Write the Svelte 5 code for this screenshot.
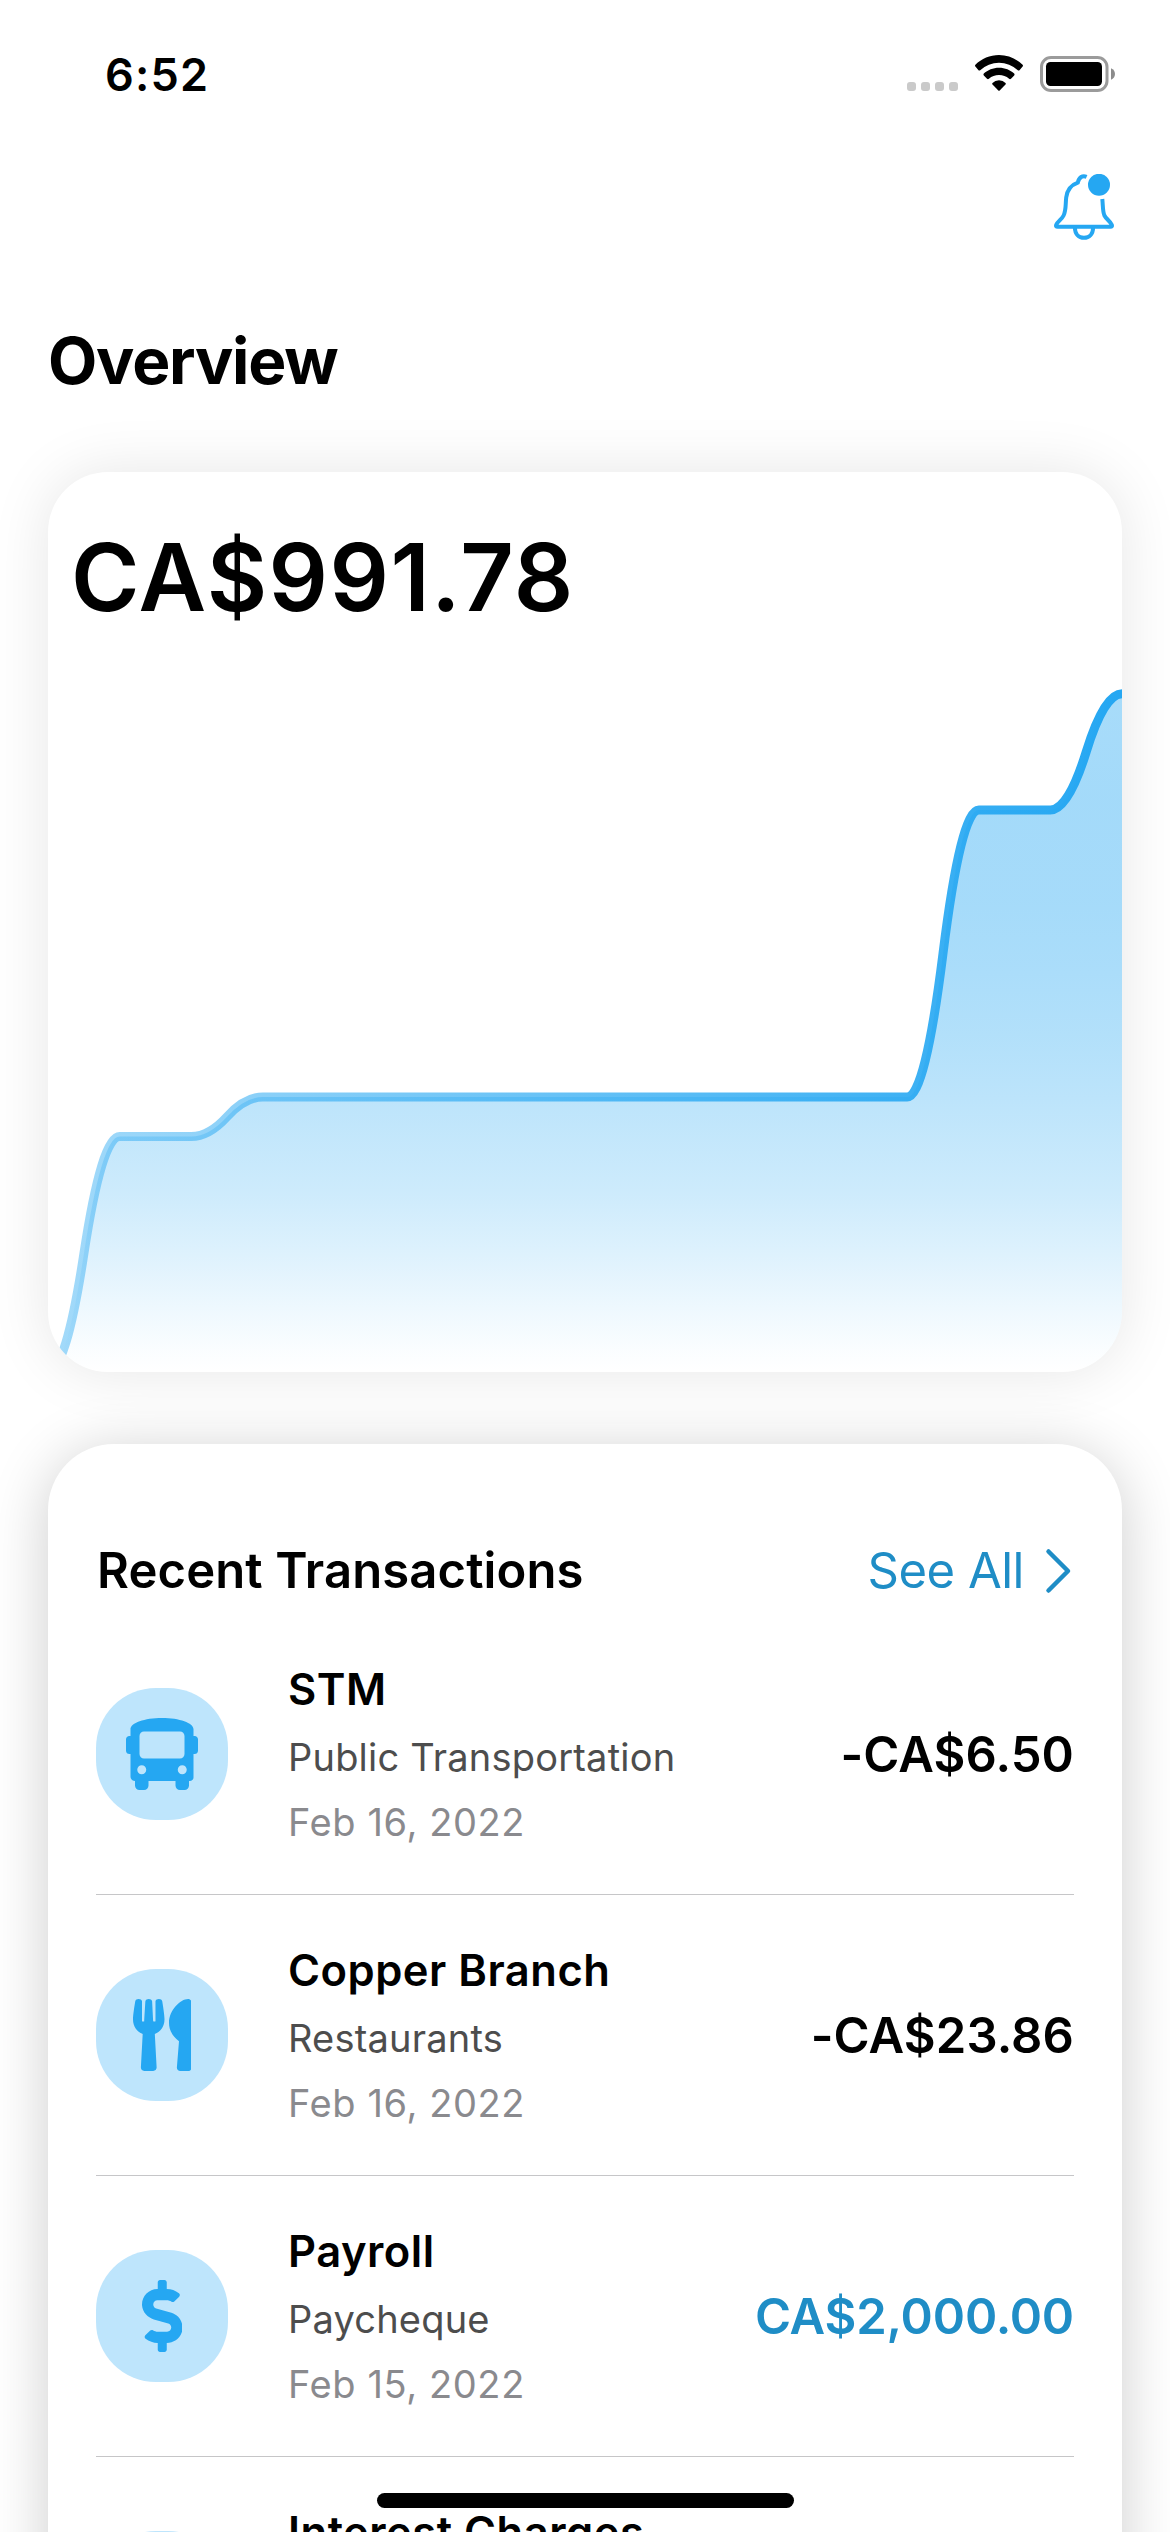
<script>
  const icons = {
    bus: {
      box: '0 0 512 512',
      d: 'M488 128h-8V80c0-44.8-99.2-80-224-80S32 35.2 32 80v48h-8c-13.25 0-24 10.74-24 24v80c0 13.25 10.75 24 24 24h8v160c0 17.67 14.33 32 32 32v32c0 17.67 14.33 32 32 32h32c17.67 0 32-14.33 32-32v-32h192v32c0 17.67 14.33 32 32 32h32c17.67 0 32-14.33 32-32v-32h6.4c16 0 25.6-12.8 25.6-25.6V256h8c13.25 0 24-10.75 24-24v-80c0-13.26-10.75-24-24-24zM112 400c-17.67 0-32-14.33-32-32s14.33-32 32-32 32 14.33 32 32-14.33 32-32 32zm16-112c-17.67 0-32-14.33-32-32V128c0-17.67 14.33-32 32-32h256c17.67 0 32 14.33 32 32v128c0 17.67-14.33 32-32 32H128zm272 112c-17.67 0-32-14.33-32-32s14.33-32 32-32 32 14.33 32 32-14.33 32-32 32z'
    },
    utensils: {
      box: '0 0 416 512',
      d: 'M207.9 15.2c.8 4.7 16.1 94.5 16.1 128.8 0 52.3-27.8 89.6-68.9 104.6L168 486.7c.7 13.7-10.2 25.3-24 25.3H80c-13.7 0-24.7-11.5-24-25.3l12.9-238.1C27.7 233.6 0 196.2 0 144 0 109.6 15.3 19.9 16.1 15.2 19.3-5.1 61.4-5.4 64 16.3v141.2c1.3 3.4 15.1 3.2 16 0 1.4-25.3 7.9-139.2 8-141.8 3.3-20.8 44.7-20.8 47.9 0 .2 2.7 6.6 116.5 8 141.8.9 3.2 14.8 3.4 16 0V16.3c2.6-21.6 44.8-21.4 48-1.1zm119.2 285.7l-15 185.1c-1.2 14 9.9 26 23.9 26h56c13.3 0 24-10.7 24-24V24c0-13.2-10.7-24-24-24-82.5 0-221.4 178.5-64.9 300.9z'
    },
    dollar: {
      box: '0 0 288 512',
      d: 'M209.2 233.4l-108-31.6C88.7 198.2 80 186.5 80 173.5c0-16.3 13.2-29.5 29.5-29.5h66.3c12.2 0 24.2 3.7 34.2 10.5 6.1 4.1 14.3 3.1 19.5-2l34.8-34c7.1-6.9 6.1-18.4-1.8-24.5C238 74.8 207.4 64.1 176 64V16c0-8.8-7.2-16-16-16h-32c-8.8 0-16 7.2-16 16v48h-2.5C45.8 64-5.4 118.7.5 183.6c4.2 46.1 39.4 83.6 83.8 96.6l102.5 30c12.5 3.7 21.2 15.3 21.2 28.3 0 16.3-13.2 29.5-29.5 29.5h-66.3C100 368 88 364.3 78 357.5c-6.1-4.1-14.3-3.1-19.5 2l-34.8 34c-7.1 6.9-6.1 18.4 1.8 24.5 24.5 19.2 55.1 29.9 86.5 30v48c0 8.8 7.2 16 16 16h32c8.8 0 16-7.2 16-16v-48.2c46.6-.9 90.3-28.6 105.7-72.7 21.5-61.6-14.6-124.8-72.5-141.7z'
    }
  };

  const transactions = [
    { merchant: 'STM', category: 'Public Transportation', date: 'Feb 16, 2022', amount: '-CA$6.50', icon: 'bus' },
    { merchant: 'Copper Branch', category: 'Restaurants', date: 'Feb 16, 2022', amount: '-CA$23.86', icon: 'utensils' },
    { merchant: 'Payroll', category: 'Paycheque', date: 'Feb 15, 2022', amount: 'CA$2,000.00', icon: 'dollar', credit: true },
    { merchant: 'Interest Charges', category: '', date: '', amount: '', icon: null }
  ];

  // Heights of the balance curve at sixteen evenly spaced days, in card pixels.
  const levels = [900, 664.5, 664.5, 625, 625, 625, 625, 625, 625, 625, 625, 625, 625, 338, 338, 221.7];
  const step = 1074 / (levels.length - 1);

  let line = `M0 ${levels[0]}`;
  for (let i = 1; i < levels.length; i++) {
    const x0 = (i - 1) * step;
    const [a, b] = [levels[i - 1], levels[i]];
    line += ` Q${x0 + step / 4} ${a} ${x0 + step / 2} ${(a + b) / 2} Q${x0 + step * 0.75} ${b} ${x0 + step} ${b}`;
  }
  const area = `${line} V900 H0 Z`;
</script>

<main class="screen">
  <header class="status">
    <span class="time">6:52</span>
    <div class="indicators">
      <div class="signal"><i></i><i></i><i></i><i></i></div>
      <svg class="wifi" viewBox="0 0 48 36">
        <path d="M24 0C33 0 41.5 3.700 47.600 9.700Q48.400 10.700 47.600 11.600L44.500 15.200Q43.700 16 42.800 15.200A27.500 27.500 0 0 0 5.200 15.200Q4.300 16 3.500 15.200L.400 11.600Q-.400 10.700 .400 9.700C6.500 3.700 15 0 24 0Z" />
        <path d="M24 12.700C30 12.700 35.300 15 39.200 18.600Q40 19.500 39.200 20.400L36 23.700Q35 24.600 34.100 23.700A15.500 15.500 0 0 0 13.900 23.700Q13 24.600 12 23.700L8.800 20.400Q8 19.500 8.800 18.600C12.700 15 18 12.700 24 12.700Z" />
        <path d="M24 25.200Q28 25.200 30.500 27.900Q31.200 28.800 30.500 29.600L24.700 35.500Q24 36.200 23.300 35.500L17.500 29.600Q16.800 28.800 17.500 27.900Q20 25.200 24 25.200Z" />
      </svg>
      <svg class="battery" viewBox="0 0 75 36">
        <rect x="1.500" y="1.500" width="65.500" height="33" rx="9.500" fill="none" stroke="#9b9b9b" stroke-width="3" />
        <rect x="6" y="6" width="56" height="24" rx="4.500" />
        <path d="M71 12.300C73.500 13.300 75 15.500 75 18S73.500 22.700 71 23.700Z" fill="#8c8c8c" />
      </svg>
    </div>
  </header>

  <div class="toolbar">
    <svg class="bell" viewBox="0 0 60 66" fill="none" stroke="#25a7f2" stroke-width="4">
      <path d="M32.600 2.800C28.500 1 25 3.200 23.800 8.600C17.500 10.800 13.200 15.500 12.200 23.500C11.400 30.500 12.200 36 9.600 41.500C8 45 3.800 47.300 2.200 50.800Q1.500 52.800 3.600 52.800H56.400Q58.500 52.800 57.800 50.800C56.200 47.300 52.200 45 50.400 41.500C48.600 37.500 49 31 48.300 25" />
      <path d="M20.900 53.500C20.900 60 24.800 63.800 30 63.800S39.100 60 39.100 53.500" />
      <circle cx="45" cy="10.800" r="11" fill="#25a7f2" stroke="none" />
    </svg>
  </div>

  <h1>Overview</h1>

  <section class="card balance">
    <svg class="chart" viewBox="0 0 1074 900">
      <defs>
        <linearGradient id="area" gradientUnits="userSpaceOnUse" x1="0" y1="221" x2="0" y2="900">
          <stop offset="0" stop-color="#25a7f2" stop-opacity=".4" />
          <stop offset=".16" stop-color="#25a7f2" stop-opacity=".42" />
          <stop offset=".31" stop-color="#25a7f2" stop-opacity=".41" />
          <stop offset=".4" stop-color="#25a7f2" stop-opacity=".39" />
          <stop offset=".51" stop-color="#25a7f2" stop-opacity=".35" />
          <stop offset=".6" stop-color="#25a7f2" stop-opacity=".305" />
          <stop offset=".74" stop-color="#25a7f2" stop-opacity=".225" />
          <stop offset=".84" stop-color="#25a7f2" stop-opacity=".14" />
          <stop offset=".915" stop-color="#25a7f2" stop-opacity=".07" />
          <stop offset=".97" stop-color="#25a7f2" stop-opacity=".02" />
          <stop offset="1" stop-color="#25a7f2" stop-opacity="0" />
        </linearGradient>
        <linearGradient id="line" gradientUnits="userSpaceOnUse" x1="0" y1="0" x2="1074" y2="0">
          <stop offset="0" stop-color="#25a7f2" stop-opacity=".42" />
          <stop offset="1" stop-color="#25a7f2" />
        </linearGradient>
      </defs>
      <path d={area} fill="url(#area)" />
      <path d={line} fill="none" stroke="url(#line)" stroke-width="9" stroke-linejoin="round" />
    </svg>
    <p class="total">CA$991.78</p>
  </section>

  <section class="card recent">
    <div class="heading">
      <h2>Recent Transactions</h2>
      <a href="#all">
        See All
        <svg viewBox="0 0 30 46"><path d="M4.500 3.500L24 23L4.500 42.500" /></svg>
      </a>
    </div>

    <ul>
      {#each transactions as t}
        <li>
          <div class="badge">
            {#if t.icon}
              <svg viewBox={icons[t.icon].box}><path d={icons[t.icon].d} /></svg>
            {/if}
          </div>
          <div class="details">
            <strong>{t.merchant}</strong>
            <span class="category">{t.category}</span>
            <span class="date">{t.date}</span>
          </div>
          <span class="amount" class:credit={t.credit}>{t.amount}</span>
        </li>
      {/each}
    </ul>
  </section>

  <div class="home"></div>
</main>

<style>
  :global(body) {
    margin: 0;
    background: #fff;
  }

  .screen {
    position: relative;
    box-sizing: border-box;
    width: 1170px;
    height: 2532px;
    overflow: hidden;
    background: #fff;
    color: #000;
    font-family: Inter, 'Liberation Sans', sans-serif;
  }

  .status {
    box-sizing: border-box;
    display: flex;
    justify-content: space-between;
    align-items: flex-start;
    height: 174px;
    padding: 55px 55px 0 105px;
  }

  .time {
    font-size: 45px;
    font-weight: 600;
    line-height: 39px;
    letter-spacing: 1.2px;
  }

  .indicators {
    display: flex;
    align-items: flex-end;
    gap: 17px;
    height: 36px;
  }

  .signal {
    display: flex;
    gap: 5px;
  }

  .signal i {
    width: 9px;
    height: 9px;
    border-radius: 3px;
    background: #cacaca;
  }

  .wifi {
    width: 48px;
    height: 36px;
  }

  .battery {
    width: 75px;
    height: 36px;
    margin-bottom: -1px;
  }

  .toolbar {
    display: flex;
    justify-content: flex-end;
    padding-right: 56px;
  }

  .bell {
    display: block;
    width: 60px;
    height: 66px;
  }

  h1 {
    margin: 81px 48px 71px;
    font-size: 64px;
    font-weight: 700;
    line-height: 80px;
    letter-spacing: -1.2px;
  }

  .card {
    box-sizing: border-box;
    margin: 0 48px;
    background: #fff;
  }

  .balance {
    display: grid;
    height: 900px;
    overflow: hidden;
    border-radius: 60px;
    box-shadow: 0 0 60px rgba(0, 0, 0, 0.1);
  }

  .balance > * {
    grid-area: 1 / 1;
  }

  .chart {
    width: 1074px;
    height: 900px;
  }

  .total {
    margin: 50px 0 0 23px;
    font-size: 93px;
    font-weight: 600;
    line-height: 110px;
    letter-spacing: 1.4px;
  }

  .recent {
    margin-top: 72px;
    height: 1300px;
    padding: 0 48px;
    border-radius: 66px;
    box-shadow: 0 8px 60px rgba(0, 0, 0, 0.2);
  }

  .heading {
    display: flex;
    justify-content: space-between;
    padding: 97px 0 13px;
    line-height: 60px;
    font-size: 49px;
  }

  h2 {
    margin: 0 0 0 1px;
    font-size: inherit;
    font-weight: 600;
    letter-spacing: 0.1px;
  }

  a {
    display: flex;
    align-items: center;
    gap: 20px;
    color: #1f8dc6;
    letter-spacing: -0.5px;
    text-decoration: none;
  }

  a svg {
    width: 30px;
    height: 46px;
    fill: none;
    stroke: currentColor;
    stroke-width: 4.5;
    stroke-linecap: round;
    stroke-linejoin: round;
  }

  ul {
    margin: 0;
    padding: 0;
    list-style: none;
  }

  li {
    display: flex;
    align-items: center;
    height: 280px;
    border-bottom: 1px solid #c6c6c8;
  }

  .badge {
    display: flex;
    flex: none;
    align-items: center;
    justify-content: center;
    width: 132px;
    height: 132px;
    margin-right: 60px;
    border-radius: 60px;
    background: #bee5fc;
  }

  .badge svg {
    height: 72px;
    fill: #25a7f2;
  }

  .details {
    display: grid;
    grid-template-rows: 72px 64px 66px;
    flex: 1;
  }

  strong {
    font-size: 43.5px;
    font-weight: 600;
    line-height: 72px;
    letter-spacing: 0.5px;
  }

  .category,
  .date {
    font-size: 38px;
    letter-spacing: 0.2px;
  }

  .category {
    line-height: 64px;
    color: #4d4d4d;
  }

  .date {
    line-height: 66px;
    color: #8a8a8e;
    letter-spacing: 0.6px;
  }

  .amount {
    font-size: 49px;
    font-weight: 600;
    letter-spacing: 0.1px;
  }

  .credit {
    color: #1f8dc6;
    letter-spacing: -0.19px;
  }

  .home {
    position: absolute;
    left: 377px;
    bottom: 24px;
    width: 417px;
    height: 15px;
    border-radius: 8px;
    background: #000;
  }
</style>
